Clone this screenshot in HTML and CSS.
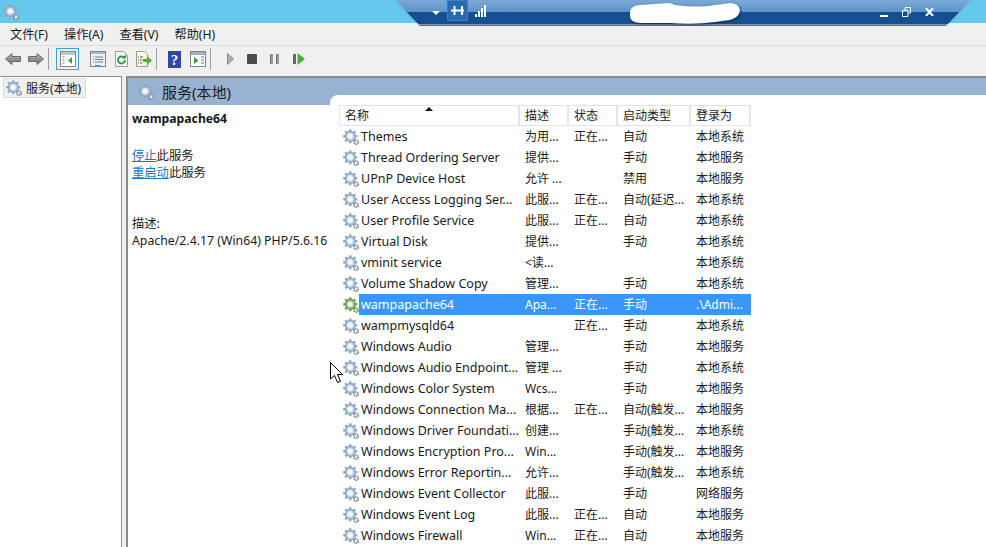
FILE: index.html
```html
<!DOCTYPE html>
<html lang="zh">
<head>
<meta charset="utf-8">
<title>服务</title>
<link rel="stylesheet" href="styles.css">
</head>
<body>
<svg class="defs" width="0" height="0">
  <defs>
    <linearGradient id="arrow-fill" x1="0" y1="0" x2="0" y2="1"><stop offset="0" stop-color="#b5b5b5"/><stop offset="1" stop-color="#6f6f6f"/></linearGradient>
    <symbol id="gear" viewBox="0 0 16.500 16.500">
      <g stroke="#8fa9c4" stroke-width="2.400">
        <path d="M7.500 .2v3M7.500 11.700v3M.2 7.500h3M11.700 7.500h3M2.300 2.300l2.200 2.200M10.500 10.500l2.200 2.200M2.300 12.700l2.200-2.200M10.500 4.500l2.200-2.200"/>
      </g>
      <circle cx="7.500" cy="7.500" r="5.200" fill="#a9c0d8" stroke="#86a1bd"/>
      <circle cx="7.500" cy="7.500" r="3" fill="#f6f9fc" stroke="#d5e0ea"/>
      <circle cx="13.500" cy="13.500" r="2.300" fill="#e4e6e9" stroke="#737d88" stroke-width="1.500" stroke-dasharray="1.400 .8"/>
    </symbol>
    <symbol id="gear-sel" viewBox="0 0 16.500 16.500">
      <g stroke="#76a63f" stroke-width="2.400">
        <path d="M7.500 .2v3M7.500 11.700v3M.2 7.500h3M11.700 7.500h3M2.300 2.300l2.200 2.200M10.500 10.500l2.200 2.200M2.300 12.700l2.200-2.200M10.500 4.500l2.200-2.200"/>
      </g>
      <circle cx="7.500" cy="7.500" r="5.200" fill="#8fb96a" stroke="#5f8f35"/>
      <circle cx="7.500" cy="7.500" r="3" fill="#eef8ff" stroke="#a8cbe4"/>
      <circle cx="13.500" cy="13.500" r="2.300" fill="#cfe3b0" stroke="#5f8f35" stroke-width="1.500" stroke-dasharray="1.400 .8"/>
    </symbol>
  </defs>
</svg>

<header class="titlebar">
  <svg class="gear"><use href="#gear"/></svg>
</header>

<nav class="menubar">
  <span>文件(F)</span><span>操作(A)</span><span>查看(V)</span><span>帮助(H)</span>
</nav>

<div class="toolbar">
  <svg class="tool w16 ml5" viewBox="0 0 16 12"><path d="M.5 6 7 .5V3.500h8.500v5H7v3z" fill="url(#arrow-fill)" stroke="#6d6d6d"/></svg>
  <svg class="tool w16 ml7" viewBox="0 0 16 12"><path d="M15.500 6 9 .5V3.500H.5v5H9v3z" fill="url(#arrow-fill)" stroke="#6d6d6d"/></svg>
  <i class="sep ml4"></i>
  <span class="tool-active">
    <svg class="tool w16" viewBox="0 0 16 16"><rect x=".5" y=".5" width="15" height="15" fill="#fff" stroke="#7d8790"/><rect x="1" y="1" width="14" height="3" fill="#b9c9d6"/><path d="M2.500 6h2M2.500 9h2M2.500 12h2" stroke="#5f7688"/><path d="M12 6v7L8 9.500z" fill="#2f9e44"/></svg>
  </span>
  <svg class="tool w16 ml11" viewBox="0 0 16 16"><rect x=".5" y=".5" width="15" height="15" fill="#eef2f5" stroke="#7d8790"/><rect x="1" y="1" width="14" height="2" fill="#aab9c6"/><path d="M3 6h1M5 6h8M3 8.500h1M5 8.500h8M3 11h1M5 11h8" stroke="#6a7f90"/><rect x="5" y="14" width="6" height="2" fill="#3aa0e0"/></svg>
  <svg class="tool w13 ml9" viewBox="0 0 13 16"><path d="M.5.500h8l4 4v11H.5z" fill="#fff" stroke="#999"/><path d="M10 9a3.500 3.500 0 1 1-1.200-2.700" fill="none" stroke="#2f9e44" stroke-width="2"/><path d="M7 7.500h4.200V3z" fill="#2f9e44"/></svg>
  <svg class="tool w16 ml8" viewBox="0 0 16 16"><path d="M.5.500h8l3 3v12H.5z" fill="#fdf8df" stroke="#999"/><path d="M2 6h1M4 6h3M2 9h1M4 9h2M2 12h1M4 12h2" stroke="#555"/><path d="M7 8h4V5l5 4.500-5 4.500v-3H7z" fill="#4caf3c"/></svg>
  <i class="sep ml4"></i>
  <svg class="tool w13 ml11" viewBox="0 0 13 17"><rect width="13" height="17" fill="#2f47a8"/><text x="6.500" y="14" class="help-q">?</text></svg>
  <svg class="tool w16 ml9" viewBox="0 0 16 16"><rect x=".5" y=".5" width="15" height="15" fill="#fff" stroke="#7d8790"/><rect x="1" y="1" width="14" height="3" fill="#9fb0bf"/><path d="M11 6h3M11 9h3M11 12h3" stroke="#5f7688"/><path d="M4 6v7l4.500-3.500z" fill="#2f9e44"/></svg>
  <i class="sep ml4"></i>
  <svg class="tool w7 ml16" viewBox="0 0 7 12"><path d="M.5.500l6 5.500-6 5.500z" fill="#b0b0b0" stroke="#8a8a8a"/></svg>
  <svg class="tool w10 ml13" viewBox="0 0 10 10"><rect width="10" height="10" rx="1" fill="#4a4a4a"/></svg>
  <svg class="tool w9 ml13" viewBox="0 0 9 10"><path d="M0 0h3v10H0zM6 0h3v10H6z" fill="#9a9a9a"/><path d="M.5 0v10M6.500 0v10" stroke="#6f6f6f"/></svg>
  <svg class="tool w12 ml14" viewBox="0 0 12 12"><path d="M0 1h3v10H0z" fill="#666"/><path d="M4.500 0l7.500 6-7.500 6z" fill="#3fb52c"/></svg>
</div>

<main class="content">
  <aside class="tree">
    <div class="tree-item"><svg class="gear"><use href="#gear"/></svg><span>服务(本地)</span></div>
  </aside>
  <section class="pane">
    <h1 class="pane-head"><svg class="gear"><use href="#gear"/></svg><span>服务(本地)</span></h1>
    <div class="pane-body">
      <div class="details">
        <p class="svc-name">wampapache64</p>
        <p class="actions"><a href="#">停止</a>此服务<br><a href="#">重启动</a>此服务</p>
        <p class="desc">描述:<br>Apache/2.4.17 (Win64) PHP/5.6.16</p>
      </div>
      <div class="list">
        <div class="row head"><span>名称<i class="sort"></i></span><span>描述</span><span>状态</span><span>启动类型</span><span>登录为</span></div>
        <div class="row"><span><svg class="gear"><use href="#gear"/></svg>Themes</span><span>为用...</span><span>正在...</span><span>自动</span><span>本地系统</span></div>
        <div class="row"><span><svg class="gear"><use href="#gear"/></svg>Thread Ordering Server</span><span>提供...</span><span></span><span>手动</span><span>本地服务</span></div>
        <div class="row"><span><svg class="gear"><use href="#gear"/></svg>UPnP Device Host</span><span>允许 ...</span><span></span><span>禁用</span><span>本地服务</span></div>
        <div class="row"><span><svg class="gear"><use href="#gear"/></svg>User Access Logging Ser...</span><span>此服...</span><span>正在...</span><span>自动(延迟...</span><span>本地系统</span></div>
        <div class="row"><span><svg class="gear"><use href="#gear"/></svg>User Profile Service</span><span>此服...</span><span>正在...</span><span>自动</span><span>本地系统</span></div>
        <div class="row"><span><svg class="gear"><use href="#gear"/></svg>Virtual Disk</span><span>提供...</span><span></span><span>手动</span><span>本地系统</span></div>
        <div class="row"><span><svg class="gear"><use href="#gear"/></svg>vminit service</span><span>&lt;读...</span><span></span><span></span><span>本地系统</span></div>
        <div class="row"><span><svg class="gear"><use href="#gear"/></svg>Volume Shadow Copy</span><span>管理...</span><span></span><span>手动</span><span>本地系统</span></div>
        <div class="row selected"><span><svg class="gear"><use href="#gear-sel"/></svg><b>wampapache64</b></span><span>Apa...</span><span>正在...</span><span>手动</span><span>.\Admi...</span></div>
        <div class="row"><span><svg class="gear"><use href="#gear"/></svg>wampmysqld64</span><span></span><span>正在...</span><span>手动</span><span>本地系统</span></div>
        <div class="row"><span><svg class="gear"><use href="#gear"/></svg>Windows Audio</span><span>管理...</span><span></span><span>手动</span><span>本地服务</span></div>
        <div class="row"><span><svg class="gear"><use href="#gear"/></svg>Windows Audio Endpoint...</span><span>管理 ...</span><span></span><span>手动</span><span>本地系统</span></div>
        <div class="row"><span><svg class="gear"><use href="#gear"/></svg>Windows Color System</span><span>Wcs...</span><span></span><span>手动</span><span>本地服务</span></div>
        <div class="row"><span><svg class="gear"><use href="#gear"/></svg>Windows Connection Ma...</span><span>根据...</span><span>正在...</span><span>自动(触发...</span><span>本地服务</span></div>
        <div class="row"><span><svg class="gear"><use href="#gear"/></svg>Windows Driver Foundati...</span><span>创建...</span><span></span><span>手动(触发...</span><span>本地系统</span></div>
        <div class="row"><span><svg class="gear"><use href="#gear"/></svg>Windows Encryption Pro...</span><span>Win...</span><span></span><span>手动(触发...</span><span>本地服务</span></div>
        <div class="row"><span><svg class="gear"><use href="#gear"/></svg>Windows Error Reportin...</span><span>允许...</span><span></span><span>手动(触发...</span><span>本地系统</span></div>
        <div class="row"><span><svg class="gear"><use href="#gear"/></svg>Windows Event Collector</span><span>此服...</span><span></span><span>手动</span><span>网络服务</span></div>
        <div class="row"><span><svg class="gear"><use href="#gear"/></svg>Windows Event Log</span><span>此服...</span><span>正在...</span><span>自动</span><span>本地服务</span></div>
        <div class="row"><span><svg class="gear"><use href="#gear"/></svg>Windows Firewall</span><span>Win...</span><span>正在...</span><span>自动</span><span>本地服务</span></div>
      </div>
    </div>
  </section>
</main>

<div class="rdp">
  <div class="rdp-shape">
    <svg class="rdp-arrow" viewBox="0 0 8 4"><path d="M0 0h8L4 4z" fill="#fff"/></svg>
    <span class="rdp-pin"><svg viewBox="0 0 13 9"><path d="M0 4.500h13M3.500 0v9M11 0v9" stroke="#fff" stroke-width="2" fill="none"/></svg></span>
    <svg class="rdp-signal" viewBox="0 0 11 12"><path d="M0 9h2v3H0zM3 6h2v6H3zM6 3h2v9H6zM9 0h2v12H9z" fill="#fff"/></svg>
    <svg class="rdp-blob" viewBox="0 0 110 22"><path d="M0 9Q2 3 10 3L38 1Q42 1 45 3Q70 6 85 3L100 1Q109 1 110 8Q110 15 100 18L85 20Q65 23 40 21L10 21Q0 20 0 14Z" fill="#fff"/></svg>
    <svg class="rdp-btn" viewBox="0 0 8 2"><path d="M0 0h8v2H0z" fill="#fff"/></svg>
    <svg class="rdp-btn2" viewBox="0 0 9 10"><path d="M.5 3.500h5.500v6H.5zM3 3V.5h5.500V6H6.500" fill="none" stroke="#fff"/></svg>
    <svg class="rdp-btn3" viewBox="0 0 9 8"><path d="M1 0l7 8M8 0L1 8" stroke="#fff" stroke-width="2"/></svg>
  </div>
</div>

<svg class="cursor" viewBox="0 0 13 22"><path d="M.5.500v16.500l4-3.500 3 7 3-1.200-3-6.800h5z" fill="#fff" stroke="#000"/></svg>
</body>
</html>
```
FILE: styles.css
```css
* { box-sizing: border-box; }
html, body { margin: 0; height: 100%; overflow: hidden; }
body {
  width: 986px; height: 547px; position: relative; background: #f0f0f0; color: #1a1a1a;
  font: 13px/17px "Noto Sans", "Noto Sans CJK SC", sans-serif;
}
.defs { position: absolute; }
.gear { width: 16px; height: 16px; flex: none; display: block; }
.titlebar { height: 23px; background: #65c7ec; padding: 4px 0 0 3px; }
.menubar { height: 23px; display: flex; gap: 16px; padding: 3px 0 0 10px; font-size: 12.200px; border-bottom: 1px solid #dcdcdc; }
.toolbar { height: 30px; padding-bottom: 4px; display: flex; align-items: center; }
.tool { display: block; height: auto; flex: none; }
.w16 { width: 16px; } .w13 { width: 13px; } .w12 { width: 12px; } .w10 { width: 10px; } .w9 { width: 9px; } .w7 { width: 7px; }
.ml4 { margin-left: 4px; } .ml5 { margin-left: 5px; } .ml7 { margin-left: 7px; } .ml8 { margin-left: 8px; } .ml9 { margin-left: 9px; } .ml11 { margin-left: 11px; } .ml13 { margin-left: 13px; } .ml14 { margin-left: 14px; } .ml16 { margin-left: 16px; }
.sep { display: block; width: 1px; height: 22px; background: #a0a0a0; flex: none; }
.tool-active { margin-left: 7px; width: 23px; height: 22px; border: 1px solid #3fa0dc; background: #e8f2fa; display: flex; align-items: center; justify-content: center; }
.help-q { font: bold 15px "Liberation Serif", serif; fill: #fff; text-anchor: middle; }
.content { height: 471px; display: flex; gap: 4px; }
.tree { width: 122px; background: #fff; border: 1px solid #8c8c8c; border-width: 1px 1px 0 0; padding: 1px 0 0 3px; }
.tree-item { width: 83px; height: 20px; background: #f0f0f0; border: 1px solid #d9d9d9; display: flex; align-items: center; gap: 4px; padding-left: 2px; font-size: 12px; white-space: nowrap; }
.pane { flex: 1; min-width: 0; background: #fff; border: 1px solid #8c8c8c; border-width: 2px 0 0 2px; }
.pane-head { margin: 0; height: 27px; background: #98b3d1; display: flex; align-items: center; gap: 8px; padding-left: 10px; font-size: 15px; font-weight: 400; }
.pane-head span { padding-top: 2px; }
.pane-body { display: flex; }
.details { width: 202px; padding: 5px 0 0 4px; flex: none; white-space: nowrap; font-size: 12.300px; }
.details p { margin: 0; }
.svc-name { font-weight: 700; font-size: 12.200px; }
.actions { padding-top: 20px; }
.actions a { color: #1a76c8; text-decoration: underline; }
.desc { padding-top: 34px; }
.list { flex: 1; margin-top: -10px; padding: 10px 0 0 9px; background: #fff; border-top-left-radius: 8px; position: relative; }
.row { width: 412px; height: 21px; display: grid; grid-template-columns: 181px 49px 49px 73px 60px; white-space: nowrap; font-size: 12px; }
.row > span { padding-left: 5px; overflow: hidden; display: flex; align-items: center; }
.row > span:first-child { padding-left: 4px; font-size: 12.500px; }
.row .gear { margin-right: 2px; }
.head { border: 1px solid #e3e3e3; border-width: 1px 0; position: relative; }
.head > span { border-right: 2px solid #e6e6e6; }
.head > span:first-child { padding-left: 5px; border-left: 1px solid #e6e6e6; font-size: 12px; }
.sort { position: absolute; left: 86px; top: 1px; width: 0; height: 0; border: 4px solid transparent; border-top: 0; border-bottom: 4px solid #111; }
.selected > span { background: #3a96fb; color: #fff; }
.selected > span:first-child { background: transparent; }
.selected .gear { margin-right: 0; }
.selected b { font-weight: 400; background: #3a96fb; align-self: stretch; line-height: 21px; flex: 1; padding-left: 2px; }
.rdp { position: absolute; left: 395px; top: 0; width: 576px; height: 26px; }
.rdp-shape { position: relative; width: 100%; height: 100%; clip-path: polygon(0 0, 100% 0, calc(100% - 25px) 100%, 25px 100%); background: linear-gradient(#7ba9d6 0, #5f93c8 45%, #14508f 46%, #14508f 92%, #8ea4c3 93%, #555 100%); }
.rdp-shape > * { position: absolute; }
.rdp-arrow { left: 37px; top: 11px; width: 8px; height: 4px; }
.rdp-pin { left: 52px; top: 0; width: 21px; height: 21px; background: #2a69b0; border: 1px solid #3d7fc6; display: flex; align-items: center; justify-content: center; }
.rdp-pin svg { width: 13px; height: 9px; }
.rdp-signal { left: 80px; top: 5px; width: 11px; height: 12px; }
.rdp-blob { left: 235px; top: 2px; width: 110px; height: 22px; filter: drop-shadow(1px 1px 1px #0a2a55); }
.rdp-btn { left: 485px; top: 15px; width: 8px; height: 2px; }
.rdp-btn2 { left: 507px; top: 7px; width: 9px; height: 10px; }
.rdp-btn3 { left: 530px; top: 8px; width: 9px; height: 8px; }
.cursor { position: absolute; left: 330px; top: 362px; width: 13px; height: 22px; }
```
